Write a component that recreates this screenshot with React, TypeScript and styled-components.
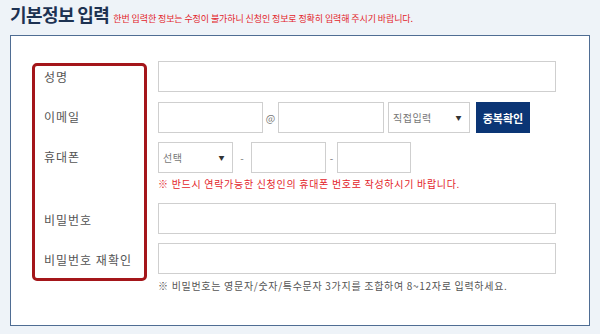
import styled, { createGlobalStyle } from 'styled-components';

const GlobalStyle = createGlobalStyle`
  html, body {
    margin: 0;
    padding: 0;
    background: #eef3f8;
    font-family: "Noto Sans CJK KR", "Noto Sans", sans-serif;
  }
`;

const Page = styled.div`
  width: 600px;
  height: 334px;
  padding: 0 10px;
  box-sizing: border-box;
`;

const Header = styled.div`
  display: flex;
  align-items: baseline;
  gap: 4px;
  height: 35px;
  padding-top: 1px;
  box-sizing: border-box;
`;

const Title = styled.h2`
  margin: 0;
  font-size: 18px;
  font-weight: 700;
  color: #1d3252;
  letter-spacing: -0.6px;
`;

const Notice = styled.span`
  font-size: 9px;
  color: #e3242b;
  letter-spacing: -0.1px;
`;

const Panel = styled.div`
  display: flex;
  gap: 11px;
  width: 580px;
  height: 291px;
  box-sizing: border-box;
  background: #fff;
  border: 1px solid #4f6d93;
  padding: 25px 0 0 21px;
`;

const LabelBox = styled.div`
  display: flex;
  flex-direction: column;
  gap: 18px;
  width: 115px;
  height: 218px;
  margin-top: 2px;
  box-sizing: border-box;
  border: 3px solid #a4161a;
  border-radius: 5px;
  padding: 0 0 0 9px;
`;

const Label = styled.div<{ $extra?: number }>`
  height: 22px;
  line-height: 22px;
  font-size: 12px;
  color: #555;
  letter-spacing: 1px;
  margin-top: ${(p) => p.$extra ?? 0}px;
`;

const Fields = styled.div`
  display: flex;
  flex-direction: column;
`;

const Row = styled.div<{ $top?: number }>`
  display: flex;
  align-items: center;
  height: 31px;
  margin-top: ${(p) => p.$top ?? 0}px;
`;

const Input = styled.input<{ $w: number }>`
  width: ${(p) => p.$w}px;
  height: 31px;
  box-sizing: border-box;
  border: 1px solid #cfcfcf;
  margin: 0;
  padding: 0 6px;
  font: inherit;
  outline: none;
`;

const Select = styled.div<{ $w: number; $gap?: number }>`
  display: flex;
  align-items: center;
  justify-content: space-between;
  width: ${(p) => p.$w}px;
  height: 31px;
  margin-left: ${(p) => p.$gap ?? 0}px;
  box-sizing: border-box;
  border: 1px solid #cfcfcf;
  padding: 0 7px 0 4px;
  font-size: 10px;
  color: #777;
  letter-spacing: 0.5px;
`;

const Arrow = styled.span`
  font-size: 6px;
  color: #333;
`;

const Sep = styled.span<{ $w: number }>`
  width: ${(p) => p.$w}px;
  text-align: center;
  font-size: 10px;
  color: #777;
`;

const Button = styled.button`
  width: 54px;
  height: 31px;
  margin-left: 6px;
  border: none;
  background: #0b3575;
  color: #fff;
  font: inherit;
  font-size: 11px;
  font-weight: 700;
  padding: 0;
`;

const Note = styled.div<{ $red?: boolean; $top: number }>`
  margin-top: ${(p) => p.$top}px;
  font-size: 10px;
  line-height: 12px;
  color: ${(p) => (p.$red ? '#e3242b' : '#555')};
  letter-spacing: 0.7px;
`;

export default function App() {
  return (
    <Page>
      <GlobalStyle />
      <Header>
        <Title>기본정보 입력</Title>
        <Notice>한번 입력한 정보는 수정이 불가하니 신청인 정보로 정확히 입력해 주시기 바랍니다.</Notice>
      </Header>
      <Panel>
        <LabelBox>
          <Label>성명</Label>
          <Label>이메일</Label>
          <Label>휴대폰</Label>
          <Label $extra={23}>비밀번호</Label>
          <Label>비밀번호 재확인</Label>
        </LabelBox>
        <Fields>
          <Row>
            <Input $w={398} type="text" />
          </Row>
          <Row $top={10}>
            <Input $w={105} type="text" />
            <Sep $w={15}>@</Sep>
            <Input $w={106} type="text" />
            <Select $w={82} $gap={4}>
              직접입력 <Arrow>▼</Arrow>
            </Select>
            <Button>중복확인</Button>
          </Row>
          <Row $top={9}>
            <Select $w={75}>
              선택 <Arrow>▼</Arrow>
            </Select>
            <Sep $w={18}>-</Sep>
            <Input $w={75} type="text" />
            <Sep $w={11}>-</Sep>
            <Input $w={74} type="text" />
          </Row>
          <Note $red $top={5}>※ 반드시 연락가능한 신청인의 휴대폰 번호로 작성하시기 바랍니다.</Note>
          <Row $top={13}>
            <Input $w={398} type="password" />
          </Row>
          <Row $top={9}>
            <Input $w={398} type="password" />
          </Row>
          <Note $top={6}>※ 비밀번호는 영문자/숫자/특수문자 3가지를 조합하여 8~12자로 입력하세요.</Note>
        </Fields>
      </Panel>
    </Page>
  );
}
